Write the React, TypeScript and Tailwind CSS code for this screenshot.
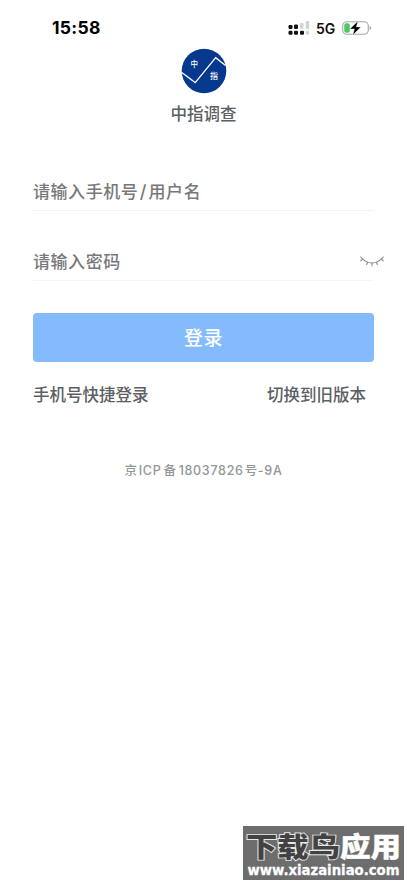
const StatusBar = () => {
    return (<div className="flex h-[42px] items-end justify-between pl-[52px] pr-[35px]">
        <p className="h-[28px] font-['Inter'] text-[17.5px] leading-[28px] font-bold tracking-[0.3px] text-black">15:58</p>
        <div className="flex h-[28px] items-center">
            <svg width="22" height="14" viewBox="0 0 22 14" fill="#111">
                <rect x="0.5" y="4" width="4" height="4" rx="1.2" />
                <rect x="6" y="3.5" width="4" height="4.5" rx="1.2" />
                <rect x="12" y="2" width="3.5" height="6" rx="1.2" fill="#d3d3d3" />
                <rect x="17.7" y="0" width="3.5" height="8" rx="1.2" fill="#d3d3d3" />
                <rect x="0.5" y="9.7" width="4" height="4" rx="1.2" />
                <rect x="6" y="9.7" width="4" height="4" rx="1.2" />
                <rect x="12" y="9.7" width="4" height="4" rx="1.2" />
                <rect x="17.7" y="9.7" width="3.5" height="3.8" rx="1.2" fill="#d3d3d3" />
            </svg>
            <p className="ml-[6px] w-[26px] font-['Inter'] text-[14px] font-semibold text-[#111]">5G</p>
            <svg width="30" height="16" viewBox="0 0 30 16">
                <rect x="0.7" y="1.7" width="25.6" height="12.6" rx="4" fill="#fff" stroke="#a5a5a5" strokeWidth="1.1" />
                <rect x="2.3" y="3.3" width="5.5" height="9.4" rx="2" fill="#4cc764" />
                <path d="M27.7 5.8c2 .8 2 3.6 0 4.4z" fill="#a5a5a5" />
                <path d="M16 1 7.8 9h4.6l-1.6 6 8.1-8.1h-4.6z" fill="#000" stroke="#fff" strokeWidth="0.4" />
            </svg>
        </div>
    </div>)
}

const Logo = () => {
    return (<svg width="46" height="46" viewBox="0 0 46 46">
        <circle cx="23" cy="23" r="22.3" fill="#06388d" />
        <path d="M.8 24.5 14.2 34.6 34.7 9.7 44.5 17.6" fill="none" stroke="#fff" strokeWidth="1.3" />
        <text x="9.5" y="19" fontSize="7.5" fontWeight="500" fill="#fff" fontFamily="Noto Sans CJK SC, sans-serif">中</text>
        <text x="29" y="30.5" fontSize="8" fontWeight="500" fill="#fff" fontFamily="Noto Sans CJK SC, sans-serif">指</text>
    </svg>)
}

const ClosedEye = () => {
    return (<svg width="26" height="14" viewBox="0 0 26 14" fill="none" stroke="#8b8e92" strokeWidth="1.2" strokeLinecap="round">
        <path d="M1.8 2C8 10 18 10 24.2 2" />
        <path d="M3.7 4 1.8 5.9M8.6 7.3 7.7 9.5M13 8.1v2.5M17.4 7.3l.9 2.2M22.3 4l1.9 1.9" />
    </svg>)
}

const Watermark = () => {
    return (<div className="absolute top-[826px] left-[243px] h-[54px] w-[161px] bg-[#6d6d6d]">
        <svg width="161" height="54" viewBox="0 0 161 54" className="overflow-visible" fontFamily="Noto Sans CJK SC, sans-serif" fontWeight="900">
            <text x="3" y="31" fontSize="27" textLength="94" lengthAdjust="spacingAndGlyphs" fill="#424242" stroke="#e8e8e8" strokeWidth="1.8" paintOrder="stroke">下载鸟</text>
            <text x="97" y="31" fontSize="27" textLength="61" lengthAdjust="spacingAndGlyphs" fill="#fff" stroke="#fff" strokeWidth="0.4">应用</text>
            <text x="4.5" y="49" fontSize="13.5" fontFamily="DejaVu Sans, sans-serif" fontWeight="700" textLength="152" lengthAdjust="spacingAndGlyphs" fill="#fff" stroke="#fff" strokeWidth="0.3">www.xiazainiao.com</text>
        </svg>
    </div>)
}

export default function App() {
    return (<div className="relative flex h-[883px] w-[407px] flex-col overflow-hidden bg-white font-['Inter','Noto_Sans_CJK_SC',sans-serif]">
        <StatusBar />

        <div className="flex h-[85px] flex-col items-center pt-[6px]">
            <Logo />
            <p className="mt-[8px] text-[16.5px] leading-[24px] font-medium text-[#5c6063]">中指调查</p>
        </div>

        <div className="mt-[43px] mr-[20px] ml-[33px] flex flex-col">
            <div className="mr-[13px] h-[41px] border-b border-[#f2f3f4] pt-[10px]">
                <p className="text-[17px] leading-[24px] font-medium tracking-[0.55px] text-[#77787b]">请输入手机号<span className="mx-[1.5px] text-[18px]">/</span>用户名</p>
            </div>
            <div className="mt-[29px] flex h-[40px] items-start justify-between pt-[10px]">
                <p className="text-[17px] leading-[24px] font-medium tracking-[0.55px] text-[#77787b]">请输入密码</p>
                <div className="mt-[5px] mr-[2px]"><ClosedEye /></div>
            </div>
            <div className="mr-[13px] h-px bg-[#f4f5f6]"></div>
        </div>

        <button className="mt-[32px] ml-[33px] h-[49px] w-[341px] rounded-[4px] bg-[#84bbfc] pt-[4px] text-[19px] font-medium tracking-[0.5px] text-white">登录</button>

        <div className="mt-[21px] mr-[41px] ml-[33px] flex justify-between text-[16.5px] leading-[24px] font-medium text-[#5c6063]">
            <p>手机号快捷登录</p>
            <p>切换到旧版本</p>
        </div>

        <p className="mt-[54px] text-center text-[12.5px] leading-[20px] font-medium tracking-[0.7px] text-[#929799]">京<span className="ml-px">ICP</span><span className="mx-[2px]">备</span>18037826<span className="ml-px">号</span>-9A</p>

        <Watermark />
    </div>)
}
